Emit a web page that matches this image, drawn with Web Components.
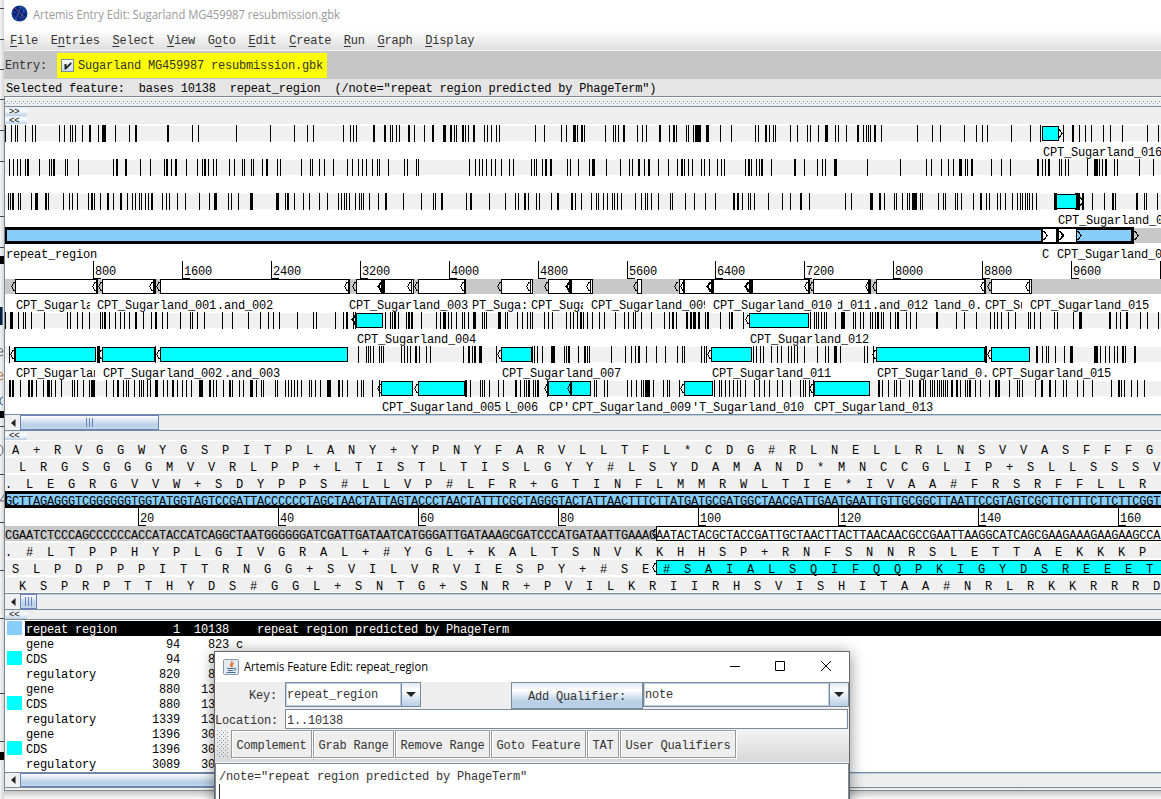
<!DOCTYPE html>
<html lang="en">
<head>
<meta charset="utf-8">
<title>Artemis Entry Edit</title>
<style>
html,body{margin:0;height:100%;overflow:hidden;background:#fff}
body{font:12px/15px "Liberation Mono",monospace;letter-spacing:-.2px;color:#000}
</style>
</head>
<body>
<artemis-desktop></artemis-desktop>
<script>
const define = (name, css, html, ready) => customElements.define(name, class extends HTMLElement {
  constructor() {
    super();
    const root = this.attachShadow({mode: 'open'});
    root.innerHTML = `<style>*{box-sizing:border-box}${css}</style>` + (typeof html === 'function' ? html(this) : html);
    if (ready) ready(this, root);
  }
});

/* ---- drawing helpers ---- */
const esc = s => s.replace(/&/g, '&amp;').replace(/</g, '&lt;');
const rect = (x, y, w, h, f) => `<rect x="${x}" y="${y}" width="${w}" height="${h}" fill="${f}"/>`;
const box = (x0, x1, y, f, h = 15) => rect(x0, y, x1 - x0, h, '#000') + rect(x0 + 1, y + 1, x1 - x0 - 2, h - 2, f);
const left = (x, y, bold) => `<path d="M${x + 4.5} ${y + 3.5}h-1v1l-1 1.5-1 1.5 1 1.5 1 1.5v1h1" fill="none" stroke="#000" stroke-width="${bold ? 2 : 1}"/>`;
const right = (x, y, bold) => `<path d="M${x + .5} ${y + 3}l2 2 1.5 2.5-1.5 2.5-2 2" fill="none" stroke="#000" stroke-width="${bold ? 2 : 1}"/>`;
let clipId = 0;
const label = (x, yc, s, x0, x1) => {
  const t = `<text x="${x}" y="${yc + 4}">${esc(s)}</text>`;
  if (!x0) return t;
  const id = 'c' + (++clipId);
  return `<clipPath id="${id}"><rect x="${x0}" y="${yc - 9}" width="${x1 - x0}" height="20"/></clipPath><g clip-path="url(#${id})">${t}</g>`;
};
/* stop codons: three chunks of positions in thirds of a pixel, "centre" or "centre*width" */
const stops = (y, chunks) => {
  let d = '';
  chunks.forEach((c, i) => c.split(' ').forEach(p => {
    const [m, w = 1] = p.split('*').map(Number);
    d += `M${i * 390 + Math.round((m - w * 1.5) / 3)} ${y}h${w}v17h${-w}z`;
  }));
  return rect(5, y + 1, 1156, 15, '#f0f0f0') + `<path d="${d}"/>`;
};

const F1 = ['16 34 46 52 76 98 106 178 193 211 218 226 247 270*2 295 312*4 346 388 408*2 504*2 577 595 709 811 883 922 940 1030 1051 1060 1069 1122*2 1155*2',
'1 7 19 28 57*2 73 103 129*2 163*3 183*2 194 199 219*2 227 235 252*2 283 291 304 319 328 436 463 514 529 553*3 562 576*2 583 646 670 676 685 702*2 742 757 769 810*2 838 852*2 859 889 895 910 924*6 952*3 991 1024 1096 1105 1128*2 1138 1150 1157',
'31 52 82 91 115 139*3 166 175 199 234*2 250 259 265 271 285*2 304 412 457 481 553 589 607 622 694 751 781 850 879*2 898 916 934 970 991 1027 1102 1135'];
const F2 = ['28 40 52 61 75 84*2 118 148 154 162*2 196 202 235 340 351*2 378*2 421 451 494 501*2 514 528*2 559 592 607 614*2 625 640 649 688 703 728 733 754 760 787 801*2 832 841 904 931 937 958 973 1000 1042 1057 1075 1087 1099 1117 1132 1138 1165',
'43 52 79 86 238 256 268 277 289 304 316 334 358 370 424 432 439 457 468*2 483*2 532 541 565 598 610*3 649 691 718 727 747*2 763 777*2 805 835 862 876*2 883 895 907 934 943 958 982 994 1003 1066 1077*2 1084 1099 1108 1116*2 1144',
'45*2 73 112 127 136 166*3 262 361 439 454 484 505 520 541*3 556 562 576*2 634 664 691 774*2 787 796 807*2 838 844 856 865 922 948*4 958 967 978*2 1003 1012 1078 1120'];
const F3 = ['25 31 39*2 55 61 94 109*3 138*2 145 190 208 217 232 265 275*2 283 301 324*2 340 363*2 382 397 406 418 424 436 445 456*2 487 498 507 532 556 598 628 646*3 685 694 715 754*3 832*3 856 864*2 882 910 928 958 982 1015 1024 1033 1039 1048 1066 1078 1084 1090 1108 1134 1158*2',
'40 94 130 136 156*2 229 243*2 298 346 376 385 405*2 415 439 448 484 504*2 546*2 556 574 604 619 625 640 652 667 673 682 694 736 754 766 772 784 805 841 847 886 913 946 976 1032*2 1044*2 1057 1075 1081 1093 1135',
'7 31 63*2 88 196 214 274*3 300*2 313 343 349 367 382 388 403*5 421 427 475 490 496 526 532 544 580 603*2 619 628 652 661 676 697 712 721 727 736 742 748 757 769 827*3 893*5 910*2 937 973 999*2 1006 1071*2 1093 1099 1132'];
const R1 = ['16 34*3 55 70 76 94 133 202 211 232 247 268 301 307 314*2 328 346 361 373 388 408*2 430 454 467*2 487 502 541 571 576 592 613 667 697 745 781 805 820 838 892 940 949 1006 1030 1041*2 1060 1066 1156',
'1 7 16*2 25 48 57*2 66*2 94 139 151 163*3 175 184 199 216 223 235 253*3 277 283 289 328*3 346 352 382 397 412 421 427 463 475 487 528 541 550 562 573*2 580 592 607 628 643 676 703 715 730 736 754 784 823 838 849*2 859 891*2 902*2 913*3 928*2 946 953*2 991 1018 1026*2 1060',
'92 103 109 115 124 133 139 166 186*3 193 220 226 241 250 271 277 286 294*2 303 310 331 346 354*2 378 391 409 471*2 529 553 589 631 643 652 664 685 706 745 751 763 781 823 832 880 901*3 990*2 1009 1021 1040*2 1081 1102 1135'];
const R2 = ['28 293 298*2 467 1075 1099 1105 1111 1120 1138 1144 1150',
'34 43 52 61 78*2 88 109 121 220 237*2 247 254*2 271*3 319 427 433 442 457 487*3 493 523 529 538*2 565 585*2 592 598 664 706 724 736 747*2 769 799 826 862 877 883 934 943 949 1090 1099 1111 1120 1144 1162',
'4 25 34 43 52 73 112 136 145 166*3 181 253 262 280 618*2 770*2 787 799 805 826 853 874*3 948*4 960 976 988 1003 1012 1030*2 1037 1065*2'];
const R3 = ['31*2 39*2 61 87*2 96*2 109 130 145*3 154 166 184 217 223 232 250 267 279*4 320 339 354*2 370 379 385 403 418 424 430 442 451 468*3 490 501 519*2 532 547 559 574 601*3 606 630*2 640 649 670 690*2 697 718 730 754*3 769 784 790 826 832 856 865 874 883 892 904 928 934 946 961 984*3 991 1018*2 1027 1042 1072 1084 1090 1117 1138',
'228*2 241 271 277 283 298 325 340 378*2 391 403 409 416*2 430 436 445*2 471 613 619 643 652 712 724 739 754 760 768*2 776*3 790 820 832 838 868 974 988 994 1006 1018 1030 1042 1051 1066 1093 1108 1123 1138 1162',
'7 31 61 69 76 88 100 297*2 307 325 343 349 361 388 397 420*2 430 436 451 457 463 472 478 484 490 496 502 516*2 532*2 541 556 562 570*2 586 600 628 648*2 658*2 688 712 718 727 766 785*2 810*2 826 850 859 892 910 937 994 1017*2 1023 1033 1054 1072 1093'];

const svgCss = ':host{display:block;flex:none}svg{display:block;shape-rendering:crispEdges}text{fill:#000;white-space:pre}';

define('genome-view', svgCss, () => {
  const C = '#0ff', S = 'CPT_Sugarland_';
  let s = rect(5, 124, 1156, 290, '#fff');
  s += stops(125, F1) + stops(159, F2) + stops(193, F3);
  s += stops(312, R1) + stops(346, R2) + stops(380, R3);
  s += box(1042, 1059, 126, C) + right(1058, 126);
  s += box(1056, 1077, 194, C) + right(1079, 194);
  /* forward strand */
  s += rect(1134, 228, 27, 15, '#c8c8c8') + rect(5, 227, 1129, 17, '#000') + rect(7, 230, 1124, 11, '#87cefa');
  s += rect(1041, 229, 15, 13, '#000') + rect(1043, 229, 13, 13, '#fff') + right(1043, 228);
  s += rect(1056, 229, 3, 13, '#000') + rect(1059, 229, 17, 13, '#fff') + right(1059, 228, 1) + rect(1076, 229, 1, 13, '#000') + right(1077, 228) + right(1134, 228);
  /* ruler */
  for (let i = 1; i <= 13; i++) {
    const x = Math.floor(4.6 + i * 88.92);
    s += rect(x, 261, 1, 18, '#000') + rect(x, 278, 8, 1, '#000');
    if (i < 13) s += label(x + 2, 271, String(i * 800));
  }
  /* reverse strand */
  s += rect(5, 279, 1156, 15, '#c8c8c8');
  [[15,97],[102,154],[153,156],[160,349],[356,384],[384,412],[411,414],[418,465],[501,531],[530,533],[548,571],[571,591],[590,593],[637,642],[679,684],[684,713],[713,751],[752,809],[813,870],[876,985],[991,1030],[1029,1032]].forEach(b => s += box(b[0], b[1], 279, '#fff'));
  [[96,2],[154,1],[348,2],[381,3],[464,2],[569,2],[711,3],[749,4],[808,2],[868,3],[984,2]].forEach(b => s += rect(b[0], 279, b[1], 15, '#000'));
  [10,91,97,148,155,343,351,406,413,459,496,525,543,585,632,673,679,803,808,864,871,979,986,1024].forEach(x => s += left(x, 279));
  [377,565,706,744].forEach(x => s += left(x, 279, 1));
  /* reverse frames */
  s += left(351, 312, 1) + box(356, 383, 313, C) + left(744, 312) + box(749, 809, 313, C);
  [[14,96],[102,155],[160,348],[501,532],[711,752],[876,985],[991,1030]].forEach(b => s += box(b[0], b[1], 347, C) + left(b[0] - 5, 347));
  [[381,413],[418,466],[548,571],[571,591],[684,713],[813,870]].forEach(b => s += box(b[0], b[1], 381, C) + left(b[0] - 5, 381));
  s += rect(15,347,1,15,'#000') + rect(464,381,2,15,'#000') + rect(813,381,2,15,'#000');
  s += label(1043,152,S+'016') + label(1058,220,S+'0') + label(6,254,'repeat_region') + label(1042,254,'C') + label(1057,254,S+'0');
  s += label(16,305,'CPT_Sugarla',16,90) + label(97,305,S+'001') + label(217,305,'.and_002') + label(349,305,S+'003') + label(472,305,'PT_Suga:') + label(531,305,'CPT_Suga',531,583) + label(591,305,S+'009',591,705) + label(713,305,S+'010') + label(836,305,'d_011',838,872) + label(872,305,'.and_012') + label(933,305,'land_0.') + label(985,305,'CPT_Su',985,1022) + label(1030,305,S+'015');
  s += label(357,339,S+'004') + label(750,339,S+'012');
  s += label(16,373,'CPT_Sugarlan',16,95) + label(103,373,S+'002') + label(224,373,'.and_003') + label(502,373,S+'007') + label(712,373,S+'011') + label(877,373,S+'0.') + label(992,373,S+'015');
  s += label(382,407,S+'005') + label(503,407,'l_006',506,540) + label(549,407,"CP'") + label(572,407,S+'009') + label(692,407,"'T_Sugarland_010") + label(814,407,S+'013');
  return `<svg width="1156" height="290" viewBox="5 124 1156 290">${s}</svg>`;
});

define('sequence-view', svgCss + '.aa{letter-spacing:13.8px}', () => {
  const rev = 'CGAATCTCCCAGCCCCCCACCATACCATCAGGCTAATGGGGGGATCGATTGATAATCATGGGATTGATAAAGCGATCCCATGATAATTGAAAGAATACTACGCTACCGATTGCTAACTTACTTAACAACGCCGAATTAAGGCATCAGCGAAGAAAGAAGAAGCCA';
  const pair = {A: 'T', T: 'A', C: 'G', G: 'C'};
  const fwd = [...rev].map(b => pair[b]).join('');
  const aa = (x, yc, t) => `<text class="aa" x="${x}" y="${yc + 4}">${t}</text>`;
  let s = rect(5, 440, 1156, 153, '#fff');
  [441, 458, 475, 543, 560, 577].forEach(y => s += rect(5, y, 1156, 15, '#f0f0f0'));
  s += aa(12, 450, 'A+RVGGWYGSPITPLANY+YPNYFARVLLTFL*CDG#RLNELLRLNSVVASFFFG');
  s += aa(19, 467, 'LRGSGGGMVVRLPP+LTISTLTISLGYY#LSYDAMAND*MNCCGLIP+SLLSSSV');
  s += aa(5, 484, '.LEGRGVVW+SDYPPS#LLVP#LFR+GTINFLMMRWLTIE*IVAA#FRSRFFLLR');
  s += rect(5, 491, 1156, 17, '#000') + rect(7, 494, 1154, 11, '#87cefa') + label(5, 501, fwd);
  s += rect(5, 505, 1156, 3, '#000');
  for (let i = 1; i <= 8; i++) {
    const x = i * 140 - 2;
    s += rect(x, 508, 1, 18, '#000') + rect(x, 525, 8, 1, '#000') + label(x + 2, 518, String(i * 20));
  }
  s += rect(5, 526, 651, 15, '#c8c8c8') + box(656, 1170, 526, '#fff') + left(651, 526) + label(5, 535, rev);
  s += aa(5, 552, '.#LTPPHYPLGIVGRAL+#YGL+KALTSNVKKHHSP+RNFSNNRSLETTAEKKKP');
  s += box(656, 1170, 560, '#0ff') + left(651, 560);
  s += aa(12, 569, 'SLPDPPPITTRNGG+SVILVRVIESPY+#SE#SAIALSQIFQQPKIGYDSREEET');
  s += aa(19, 586, 'KSPRPTTHYDS#GGL+SNTG+SNR+PVILKRIIRHSVISHITAA#NRLRKKRRRD');
  return `<svg width="1156" height="153" viewBox="5 440 1156 153">${s}</svg>`;
});

define('title-bar', ':host{display:flex;align-items:center;flex:none}svg{display:block;overflow:visible}text{font:12px "Open Sans","Noto Sans",sans-serif;letter-spacing:0}',
  h => `<slot></slot><svg width="${+h.getAttribute('width') + 2}" height="18"><text y="13" textLength="${h.getAttribute('width')}" lengthAdjust="spacingAndGlyphs" fill="${h.getAttribute('ink')}">${h.getAttribute('caption')}</text></svg>`);

define('menu-bar', `:host{display:flex;gap:12.67px;align-items:center;flex:none;height:21px;padding:3px 0 0 6px;color:#333;background:linear-gradient(#fff,#dedede);border-bottom:1px solid #f6f6f6}u{text-underline-offset:2px}`,
  ['_File', 'E_ntries', '_Select', '_View', 'G_oto', '_Edit', '_Create', '_Run', '_Graph', '_Display'].map(m => `<span>${m.replace(/_(.)/, '<u>$1</u>')}</span>`).join(''));

define('fold-button', ':host{display:block;flex:none;width:22px;height:9px;background:linear-gradient(#dfe9f3,#fff 40%,#b8cfe5);font:bold 9px/8px "Liberation Sans",sans-serif;letter-spacing:0;color:#444;padding-left:4px;overflow:hidden}', '<slot></slot>');

define('scroll-bar', `:host{display:flex;flex:none;height:17px;border-top:1px solid #7a8a99;border-bottom:1px solid #7a8a99;background:linear-gradient(#b8cfe5 1px,#eee 1px);padding-left:1px}
.b{width:14px;display:flex;align-items:center;justify-content:center;background:#f0f0f0}
.t{display:flex;align-items:center;justify-content:center;gap:1px;border:1px solid #6382bf;background:linear-gradient(#fff,#dfe9f3 30%,#b8cfe5 70%,#c4d7ea);width:var(--thumb,139px)}
.t i{width:1px;height:9px;background:#6382bf;margin-right:1px}`,
  '<div class="b"><svg width="5" height="8"><path d="M0 4L4.5 0V8z" fill="#222"/></svg></div><div class="t"><i></i><i></i><i></i></div>');

define('feature-row', `:host{display:grid;grid-template-columns:15px 3px 120px 35px 49px 28px 1fr;height:15px;line-height:18px;white-space:pre;overflow:hidden}
i{background:var(--chip,transparent);height:14px}
:host([selected]) .x{background:#000;color:#fff}
.n{text-align:right}.l{padding-left:1px}.cut{padding-right:14px}`,
  h => { const [n, a, b, c = '', d = ''] = h.getAttribute('data').split('|');
    return `<i></i><span></span><span class="x l">${n}</span><span class="x n">${a}</span><span class="x n ${b.length < 3 ? 'cut' : ''}">${b}</span><span class="x" style="padding-left:7px">${c}</span><span class="x">${d}</span>`; });

define('feature-list', ':host{display:block;flex:none;height:153px;padding:1px 0 0 2px;border-top:1px solid #7a8a99;background:#fff}',
  ['repeat region|1|10138||repeat region predicted by PhageTerm', 'gene|94|823|c', 'CDS|94|8', 'regulatory|820|8', 'gene|880|13', 'CDS|880|13', 'regulatory|1339|13', 'gene|1396|30', 'CDS|1396|30', 'regulatory|3089|30']
    .map((r, i) => `<feature-row data="${r}" ${i ? '' : 'selected'} style="--chip:${i ? (r.startsWith('CDS') ? '#0ff' : 'transparent') : '#87cefa'}"></feature-row>`).join(''));

define('entry-bar', `:host{display:flex;flex:none;height:28px;background:#c6c6c6;color:#333;align-items:center;padding-left:2px}
.w{padding-top:3px;margin-left:-1px}.e .w{margin-left:-1px}
.e{margin-left:10px;height:25px;width:270px;background:#ff0;display:flex;align-items:center;padding-left:4px;gap:5px}`,
  `<span class="w">Entry:</span><div class="e"><svg width="13" height="13"><defs><linearGradient id="g" x2="0" y2="1"><stop stop-color="#fff"/><stop offset="1" stop-color="#c5d8eb"/></linearGradient></defs><rect x=".5" y=".5" width="12" height="12" fill="url(#g)" stroke="#7a8a99"/><path d="M3.500 5h2v2.500l4-4h1v1.500L5 10.500H3.500z" fill="#222"/></svg><span class="w">Sugarland MG459987 resubmission.gbk</span></div>`);

define('main-window', `:host{display:flex;flex-direction:column;width:1157px;height:791px;background:#eee}
.title{height:30px;padding-left:7px;background:#fff}.title svg{margin-right:5px;margin-top:-3px}
.sel{height:17px;flex:none;background:#e5e5e5;padding-left:2px;line-height:21px;letter-spacing:-.21px;white-space:pre}
.body{flex:1;border-left:1px solid #7a8a99;border-bottom:1px solid #8a8a8a;display:flex;flex-direction:column}
.grip{height:11px;flex:none;border:solid #7a8a99;border-width:1px 0;background:linear-gradient(#fff,#fff) 0 0/100% 1px no-repeat,linear-gradient(90deg,#8a95a0 1px,transparent 1px) 2px 4px/4px 1px repeat-x,linear-gradient(90deg,#8a95a0 1px,transparent 1px) 0 6px/4px 1px repeat-x,#eee}`,
`<title-bar class="title" width="307" ink="#999" caption="Artemis Entry Edit: Sugarland MG459987 resubmission.gbk"><svg width="17" height="17" style="display:block"><circle cx="8.5" cy="8.5" r="8" fill="#123a94"/><path d="M3 4l10 10M6 2l9 9M2 8l7 7" stroke="#0b1e6c" stroke-width="2"/><path d="M4 3l9 10" stroke="#c33b5b" stroke-dasharray="2 1"/><path d="M10 2l-5 12M13 5l-3 8" stroke="#5f8fd0" stroke-dasharray="1 1"/></svg></title-bar>
<menu-bar></menu-bar><entry-bar></entry-bar>
<div class="sel">Selected feature:  bases 10138  repeat_region  (/note="repeat region predicted by PhageTerm")</div>
<div class="body"><div class="grip"></div><fold-button>&gt;&gt;</fold-button><fold-button style="height:8px">&lt;&lt;</fold-button>
<genome-view></genome-view><scroll-bar></scroll-bar><fold-button>&lt;&lt;</fold-button>
<sequence-view></sequence-view><scroll-bar style="--thumb:17px"></scroll-bar><fold-button>&lt;&lt;</fold-button>
<feature-list></feature-list><scroll-bar style="--thumb:600px;height:16px"></scroll-bar></div>`);

define('combo-box', `:host{display:flex;height:25px;border:1px solid #7a8a99;background:#fff;color:#333}
.v{flex:1;border:1px solid #b8cfe5;padding:4px 0 0 0}.a{width:19px;border-left:1px solid #7a8a99;background:linear-gradient(#dfe9f3,#fff 30%,#b8cfe5);display:flex;align-items:center;justify-content:center}`,
'<div class="v"><slot></slot></div><div class="a"><svg width="10" height="6"><path d="M0 0H10L5 5z" fill="#222"/></svg></div>');

define('tool-button', ':host{display:flex;flex:none;height:28px;align-items:center;padding:4px 4.5px 0;border:1px solid #999;box-shadow:inset 1px 1px #fff,1px 1px #fff;background:#eee;color:#333;white-space:pre}', '<slot></slot>');

define('feature-dialog', `:host{display:flex;flex-direction:column;position:absolute;left:214px;top:651px;width:636px;height:160px;border:1px solid #666;background:#eee;box-shadow:0 2px 14px rgba(0,0,0,.45);color:#333}
.title{height:30px;background:#fff;padding-left:8px}.title .j{margin-right:4px}
.row{display:flex;flex:none}.lab{width:62px;text-align:right;padding-top:7px}
.aq{width:132px;height:27px;border:1px solid #7a8a99;background:linear-gradient(#dfe9f3,#fff 30%,#b8cfe5 75%);text-align:center;padding-top:7px}
.loc{height:21px}.loc .lab{width:70px;text-align:left;padding-top:6px}
.in{width:563px;height:20px;margin-top:1px;border:1px solid #7a8a99;background:#fff;padding:4px 0 0 1px}
.tools{display:flex;flex:none;height:34px;gap:1px;padding:1px 0 0 2px;background:linear-gradient(#f4f4f4,#d8d8d8);border-bottom:1px solid #f4f4f4}
.g{display:block;margin-right:2px}
.ta{flex:1;background:#fff;border:1px solid #7a8a99;padding:6px 0 0 3px}.caret{width:1px;height:15px;margin-top:-1px;background:#333}`,
`<title-bar class="title" width="184" ink="#000" caption="Artemis Feature Edit: repeat_region"><svg class="j" width="17" height="17" style="display:block"><rect x=".5" y=".5" width="15" height="15" rx="1" fill="#e3e9ee" stroke="#8798a8"/><path d="M8.5 2c2 2-3 3 0 6M10.5 4c-2 1-2 2-1 4" stroke="#e8772e" stroke-width="1.3" fill="none"/><path d="M4 9.5h7M5 11.5h5M3.500 13.500h9M11 9.500c3-.5 2 2 0 2" stroke="#3f6e96" fill="none"/></svg></title-bar>
<div class="row"><span class="lab">Key:</span><combo-box style="width:136px;margin-left:8px">repeat_region</combo-box><span style="width:90px"></span><div class="aq">Add Qualifier:</div><combo-box style="width:206px">note</combo-box></div>
<div class="row loc" style="margin-top:-1px"><span class="lab">Location:</span><div class="in">1..10138</div></div>
<div class="tools"><svg class="g" width="11" height="28"><defs><pattern id="d" width="4" height="4" patternUnits="userSpaceOnUse"><path d="M0 0h1v1h-1zM2 2h1v1h-1z" fill="#7a93ad"/></pattern></defs><rect width="11" height="28" fill="url(#d)"/></svg><tool-button>Complement</tool-button><tool-button>Grab Range</tool-button><tool-button>Remove Range</tool-button><tool-button>Goto Feature</tool-button><tool-button>TAT</tool-button><tool-button>User Qualifiers</tool-button></div>
<div class="ta">/note="repeat region predicted by PhageTerm"<div class="caret"></div></div>
<svg style="position:absolute;left:514px;top:8px" width="104" height="13" fill="none" stroke="#000"><path d="M1 6.500h10M46.500 1.500h9v9h-9zM92 1l10 10M102 1l-10 10"/></svg>`);

define('page-sliver', ':host{display:block;width:4px;flex:none;background:linear-gradient(90deg,#f4f4f4,#d5d5d5)}svg{display:block}', () => {
  let s = '';
  [8, 39, 69, 99, 130, 161, 216, 247, 426, 474, 522, 570, 618, 693, 741].forEach(y => s += rect(0, y, 4, 1, '#444'));
  s += rect(0, 256, 4, 8, '#000') + rect(0, 307, 2, 18, '#0d1b33') + rect(2, 307, 1, 18, '#3c74b0') + rect(0, 411, 4, 7, '#000') + rect(0, 752, 4, 8, '#000');
  /* edges of the text behind the window */
  s += '<g fill="none" stroke-width="1"><path d="M0 348q3 1 3 4H0M0 356l3-1" stroke="#555"/><path d="M0 372q3 1 3 4H0M0 380l3-1" stroke="#b0662c"/><path d="M3 397q-3 0-3 4t3 4" stroke="#2b63a8"/><path d="M0 445q3 1 3 5t-3 6M0 501l4-6M0 501h4" stroke="#666"/></g>';
  return `<svg width="4" height="799">${s}</svg>`;
});

define('artemis-desktop', ':host{display:flex;position:relative;width:1161px;height:799px;overflow:hidden;background:linear-gradient(#fff 790px,#c4c4c4 791px,#fafafa 799px)}',
  '<page-sliver></page-sliver><main-window></main-window><feature-dialog></feature-dialog>');
</script>
</body>
</html>
